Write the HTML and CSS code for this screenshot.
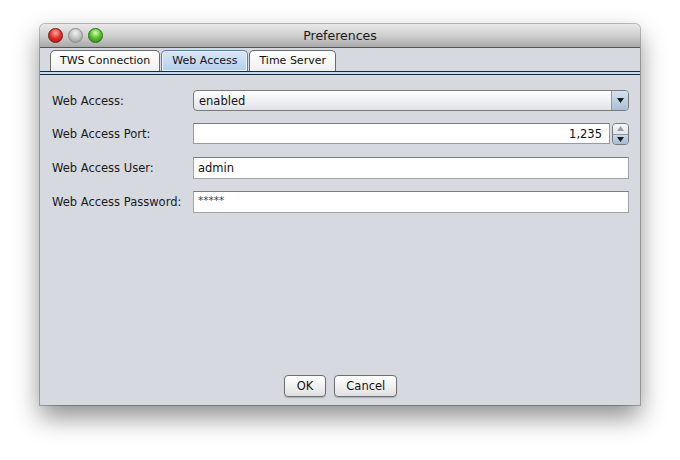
FILE: index.html
```html
<!DOCTYPE html>
<html>
<head>
<meta charset="utf-8">
<link rel="stylesheet" href="styles.css">
</head>
<body>
<div class="window">
  <div class="titlebar">
    <div class="lights">
      <span class="light red"></span>
      <span class="light gray"></span>
      <span class="light green"></span>
    </div>
    <div class="title">Preferences</div>
  </div>
  <div class="tabs">
    <div class="tab">TWS Connection</div>
    <div class="tab active">Web Access</div>
    <div class="tab">Time Server</div>
  </div>
  <div class="tabline"></div>
  <div class="content">
    <div class="form">
      <div class="label">Web Access:</div>
      <div class="combo">
        <span class="combo-text">enabled</span>
        <span class="combo-btn"><svg width="7" height="5" viewBox="0 0 7 5"><path d="M0 0H7L3.5 5Z" fill="#1a1a1a"/></svg></span>
      </div>
      <div class="label">Web Access Port:</div>
      <div class="spinner">
        <span class="spin-field">1,235</span>
        <span class="spin-btns">
          <span class="spin-up"><svg width="7" height="5" viewBox="0 0 7 5"><path d="M0 5H7L3.5 0Z" fill="#9aa0a8"/></svg></span>
          <span class="spin-down"><svg width="7" height="5" viewBox="0 0 7 5"><path d="M0 0H7L3.5 5Z" fill="#1a1a1a"/></svg></span>
        </span>
      </div>
      <div class="label">Web Access User:</div>
      <div class="field">admin</div>
      <div class="label">Web Access Password:</div>
      <div class="field pw">*****</div>
    </div>
    <div class="buttons">
      <div class="btn ok">OK</div>
      <div class="btn">Cancel</div>
    </div>
  </div>
</div>
</body>
</html>
```

FILE: styles.css
```css
html, body {
  margin: 0;
  padding: 0;
  background: #ffffff;
  width: 680px;
  height: 460px;
  overflow: hidden;
  font-family: "DejaVu Sans", "Liberation Sans", sans-serif;
  font-size: 11.5px;
  color: #111;
}
.window {
  margin: 24px 0 0 40px;
  width: 600px;
  height: 381px;
  background: #d6d9e0;
  border-radius: 5px 5px 0 0;
  box-shadow: 0 12px 26px rgba(0,0,0,0.45), 0 0 0 1px rgba(0,0,0,0.25);
  display: flex;
  flex-direction: column;
  box-sizing: border-box;
}
.titlebar {
  height: 24px;
  box-sizing: border-box;
  border-radius: 5px 5px 0 0;
  background: linear-gradient(#e9e9e9, #cfcfcf 50%, #a9a9a9);
  border-bottom: 1px solid #555;
  display: flex;
  align-items: center;
  position: relative;
  flex: none;
}
.lights {
  display: flex;
  gap: 5px;
  margin-left: 8px;
}
.light {
  width: 15px;
  height: 15px;
  border-radius: 50%;
  box-sizing: border-box;
}
.red {
  background: radial-gradient(circle at 50% 30%, #ffb0a8 0, #e8342a 45%, #9c0d08 100%);
  border: 1px solid #7a1a16;
}
.gray {
  background: radial-gradient(circle at 50% 30%, #f2f2f2 0, #c2c2c2 50%, #8e8e8e 100%);
  border: 1px solid #8a8a8a;
}
.green {
  background: radial-gradient(circle at 50% 30%, #d6ffb0 0, #5cc433 45%, #2a7a12 100%);
  border: 1px solid #2f6a1c;
}
.title {
  position: absolute;
  left: 0;
  right: 0;
  top: 4px;
  text-align: center;
  font-size: 12.5px;
  color: #1a1a1a;
}
.tabs {
  display: flex;
  padding: 2px 0 0 10px;
  height: 21px;
  flex: none;
}
.tab {
  height: 21px;
  box-sizing: border-box;
  padding: 3px 9px 0 9px;
  border: 1px solid #6c6c6c;
  border-bottom: none;
  border-radius: 5px 5px 0 0;
  background: linear-gradient(#ffffff, #f0f0f0);
  margin-right: 1px;
  font-size: 11px;
  white-space: nowrap;
}
.tab.active {
  background: linear-gradient(#d9e8f7, #b3cfec);
  border-color: #5b7fa8;
  box-shadow: inset 0 0 0 1px #e9f2fb;
  padding: 3px 10px 0 10px;
}
.tabline {
  height: 4px;
  box-sizing: border-box;
  border-top: 1px solid #1d2a3a;
  border-bottom: 1px solid #1d2a3a;
  background: #c4dcf3;
  flex: none;
}
.content {
  flex: 1;
  display: flex;
  flex-direction: column;
  padding: 15px 11px 8px 12px;
}
.form {
  display: grid;
  grid-template-columns: 141px 1fr;
  row-gap: 12px;
  align-items: center;
}
.label {
  color: #1a1a1a;
}
.combo {
  height: 21px;
  box-sizing: border-box;
  border: 1px solid #7a7a7a;
  border-radius: 4px;
  background: linear-gradient(#ffffff, #eceef1 60%, #dfe2e6);
  display: flex;
  align-items: center;
  justify-content: space-between;
  overflow: hidden;
}
.combo-text {
  padding-left: 5px;
}
.combo-btn {
  width: 16px;
  height: 100%;
  border-left: 1px solid #8a9aaa;
  background: linear-gradient(#d4e2ef, #a9bfd4);
  display: flex;
  align-items: center;
  justify-content: center;
}
.spinner {
  height: 22px;
  display: flex;
}
.spin-field {
  flex: 1;
  box-sizing: border-box;
  border: 1px solid #9a9a9a;
  border-top-color: #7c7c7c;
  background: #fff;
  text-align: right;
  padding: 3px 7px 0 0;
  margin-right: 2px;
  height: 21px;
}
.spin-btns {
  width: 17px;
  height: 22px;
  box-sizing: border-box;
  border: 1px solid #7a7a7a;
  border-radius: 4px;
  overflow: hidden;
  display: flex;
  flex-direction: column;
}
.spin-up {
  flex: 1;
  background: linear-gradient(#f6f6f6, #e2e4e7);
  display: flex;
  align-items: center;
  justify-content: center;
  border-bottom: 1px solid #8a9aaa;
}
.spin-down {
  flex: 1;
  background: linear-gradient(#c9d9ea, #a4bbd2);
  display: flex;
  align-items: center;
  justify-content: center;
}
.field {
  height: 22px;
  box-sizing: border-box;
  border: 1px solid #a4a4a4;
  border-top-color: #7e7e7e;
  background: #fff;
  padding: 3px 0 0 4px;
}
.field.pw {
  font-size: 10.5px;
  padding-top: 2px;
  color: #444;
}
.buttons {
  margin-top: auto;
  display: flex;
  justify-content: center;
  gap: 8px;
}
.btn {
  height: 22px;
  box-sizing: border-box;
  border: 1px solid #6e6e6e;
  border-radius: 4px;
  background: linear-gradient(#ffffff, #f1f1f1 50%, #e0e0e0);
  padding: 3px 11px 0;
  box-shadow: 0 1px 1px rgba(0,0,0,0.2);
}
.btn.ok {
  padding: 3px 12px 0;
}
```
